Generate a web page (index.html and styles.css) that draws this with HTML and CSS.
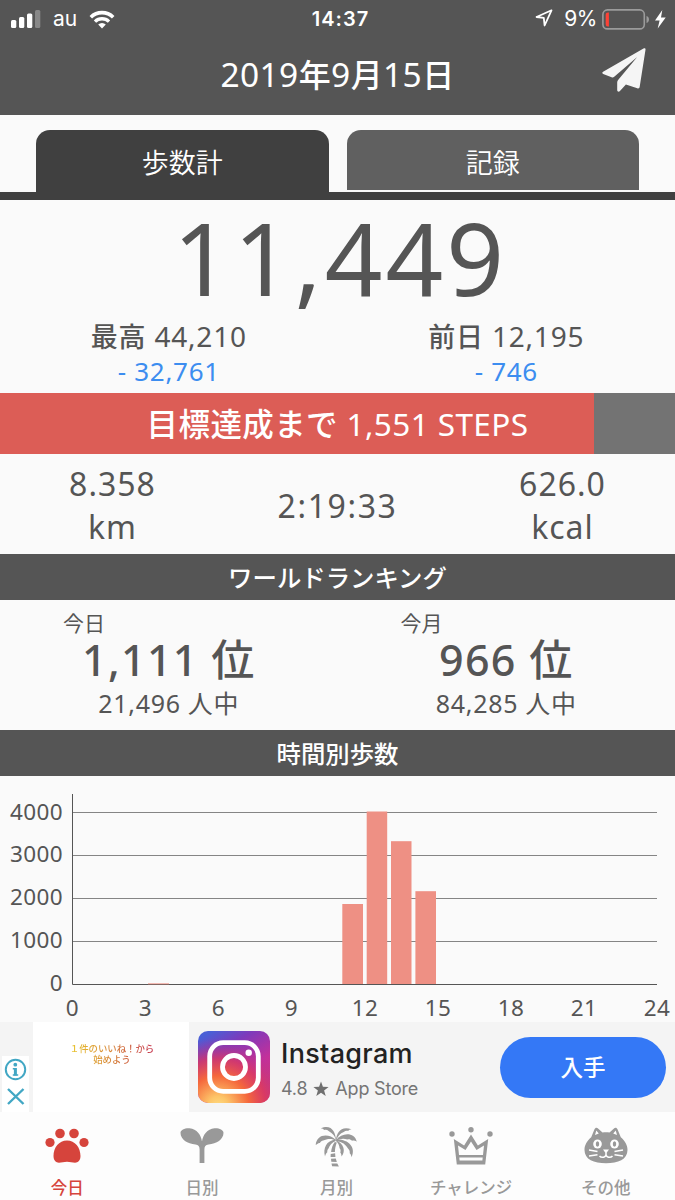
FILE: index.html
```html
<!DOCTYPE html>
<html lang="ja">
<head>
    <meta charset="UTF-8">
    <meta name="viewport" content="width=device-width, initial-scale=1.0">
    <title>歩数計</title>
    <link rel="stylesheet" href="styles.css">
</head>
<body>
    <header class="header">
        <div class="status-bar">
            <div class="status-left">
                <svg class="signal" width="30" height="18" viewBox="0 0 30 18" fill="#fff">
                    <rect x="0" y="10" width="5.3" height="8" rx="1.5"/>
                    <rect x="8" y="7" width="5.3" height="11" rx="1.5"/>
                    <rect x="16" y="3.6" width="5.3" height="14.4" rx="1.5"/>
                    <rect x="24" y="0" width="5.3" height="18" rx="1.5" opacity=".3"/>
                </svg>
                <span class="carrier">au</span>
                <svg class="wifi" width="26" height="19" viewBox="0 0 26 19">
                    <path d="M1.8 7.2a16 16 0 0 1 22.4 0" fill="none" stroke="#fff" stroke-width="3.6"/>
                    <path d="M6 11.6a10 10 0 0 1 14 0" fill="none" stroke="#fff" stroke-width="3.3"/>
                    <path d="M9.2 14.5a5.4 5.4 0 0 1 7.6 0L13 18.4z" fill="#fff"/>
                </svg>
            </div>
            <div class="clock">14:37</div>
            <div class="status-right">
                <svg class="location" width="18" height="18" viewBox="0 0 18 18">
                    <path d="M16.500 1.300L1.500 8l7.300.9.8 7.600z" fill="none" stroke="#fff" stroke-width="1.8" stroke-linejoin="round"/>
                </svg>
                <span class="percent">9%</span>
                <svg class="battery" width="48" height="21" viewBox="0 0 48 21">
                    <rect x=".9" y=".9" width="41.4" height="19" rx="4.5" fill="none" stroke="#9b9b9b" stroke-width="1.6"/>
                    <path d="M44.5 7v7c1.6-.5 2.500-1.800 2.500-3.500S46.100 7.500 44.500 7z" fill="#9b9b9b"/>
                    <path d="M6.900 3.500v14H6a2.300 2.300 0 0 1-2.300-2.300V5.800A2.300 2.300 0 0 1 6 3.500z" fill="#fc4236"/>
                </svg>
                <svg class="bolt" width="11" height="19" viewBox="0 0 11 19">
                    <path d="M7.300 0L0 10.400h4.600L2.700 18.500 10.700 7.600H6z" fill="#fff"/>
                </svg>
            </div>
        </div>
        <div class="title-bar">
            <h1>2019<b>年</b>9<b>月</b>15<b>日</b></h1>
            <svg class="send" width="44" height="44" viewBox="0 0 44 44">
                <path d="M41.500.6C42.700-.2 43.700.2 43.500 1.800L37.700 38.800C37.500 40.200 36.500 40.700 35.300 40.200L23.900 36.600 17.700 43.200C16.700 44.200 15.200 43.600 15.200 42.100V34.600C15.200 33.400 15.700 32.600 16.500 31.600L35.200 9 12.200 28.700C11.400 29.400 10.600 29.600 9.600 29.200L1.200 26C.1 25.500 0 24.400 1.100 23.700z" fill="#f5f5f5"/>
            </svg>
        </div>
    </header>

    <nav class="tabs">
        <div class="tab active">歩数計</div>
        <div class="tab">記録</div>
    </nav>

    <section class="summary">
        <div class="steps">11,449</div>
        <div class="compare">
            <div>
                <p class="compare-value"><b>最高</b> 44,210</p>
                <p class="compare-diff">- 32,761</p>
            </div>
            <div>
                <p class="compare-value"><b>前日</b> 12,195</p>
                <p class="compare-diff">- 746</p>
            </div>
        </div>
    </section>

    <div class="goal"><b>目標達成まで</b> 1,551 STEPS</div>

    <section class="stats">
        <div>8.358<br>km</div>
        <div class="time">2:19:33</div>
        <div>626.0<br>kcal</div>
    </section>

    <h2 class="section-title">ワールドランキング</h2>
    <section class="ranking">
        <div>
            <p class="rank-label">今日</p>
            <p class="rank-value">1,111 位</p>
            <p class="rank-total">21,496 人中</p>
        </div>
        <div>
            <p class="rank-label">今月</p>
            <p class="rank-value">966 位</p>
            <p class="rank-total">84,285 人中</p>
        </div>
    </section>

    <h2 class="section-title">時間別歩数</h2>
    <svg class="chart" width="675" height="246" viewBox="0 0 675 246">
        <g class="grid">
            <path d="M72 36.500h585M72 79.500h585M72 122.500h585M72 165.500h585"/>
        </g>
        <path class="axis" d="M72.500 18v190.500H657"/>
        <g class="bars">
            <rect x="148" y="207" width="21" height="1.500" opacity=".6"/>
            <rect x="342.300" y="128" width="20.700" height="80"/>
            <rect x="366.700" y="35.500" width="20.500" height="172.500"/>
            <rect x="391" y="65.200" width="20.500" height="142.800"/>
            <rect x="415.400" y="115.200" width="20.600" height="92.800"/>
        </g>
        <g class="label-y">
            <text x="63" y="43.500">4000</text>
            <text x="63" y="85.500">3000</text>
            <text x="63" y="128.500">2000</text>
            <text x="63" y="171.500">1000</text>
            <text x="63" y="214.500">0</text>
        </g>
        <g class="label-x">
            <text x="72.500" y="240">0</text>
            <text x="145.500" y="240">3</text>
            <text x="218.500" y="240">6</text>
            <text x="291.500" y="240">9</text>
            <text x="365" y="240">12</text>
            <text x="438" y="240">15</text>
            <text x="511" y="240">18</text>
            <text x="584" y="240">21</text>
            <text x="657" y="240">24</text>
        </g>
    </svg>

    <aside class="ad">
        <div class="ad-choices">
            <svg width="27" height="56" viewBox="0 0 27 56" fill="none" stroke="#42a7c4" stroke-width="2">
                <circle cx="13.500" cy="13.500" r="9.700"/>
                <circle cx="13.300" cy="8.700" r="1.900" fill="#42a7c4" stroke="none"/>
                <path d="M10.800 12.700h2.500M10.800 19h5.400" stroke-width="1.600"/>
                <path d="M13.400 12v7.500" stroke-width="3"/>
                <path d="M6 33l15.500 15M21.500 33L6 48" stroke-width="2.400"/>
            </svg>
        </div>
        <div class="ad-banner"><span>１件のいいね！から<br>始めよう</span></div>
        <svg class="ad-icon" width="72" height="72" viewBox="0 0 72 72">
            <defs>
                <linearGradient id="igBase" x1=".2" y1="0" x2=".8" y2="1">
                    <stop offset="0" stop-color="#4a5fd6"/>
                    <stop offset=".25" stop-color="#7e3abb"/>
                    <stop offset=".6" stop-color="#c3309a"/>
                    <stop offset="1" stop-color="#cf3a70"/>
                </linearGradient>
                <radialGradient id="igGlow" cx=".28" cy="1.050" r=".95">
                    <stop offset="0" stop-color="#ffdc80"/>
                    <stop offset=".15" stop-color="#fdc468"/>
                    <stop offset=".45" stop-color="#f5683c"/>
                    <stop offset=".7" stop-color="#dc3a60" stop-opacity=".8"/>
                    <stop offset="1" stop-color="#b0309b" stop-opacity="0"/>
                </radialGradient>
            </defs>
            <rect width="72" height="72" rx="10" fill="url(#igBase)"/>
            <rect width="72" height="72" rx="10" fill="url(#igGlow)"/>
            <rect x="11.700" y="11.700" width="48.600" height="48.600" rx="13.500" fill="none" stroke="#fff" stroke-width="4.800"/>
            <circle cx="36" cy="36" r="11.500" fill="none" stroke="#fff" stroke-width="4.800"/>
            <circle cx="50.700" cy="21.700" r="3.200" fill="#fff"/>
        </svg>
        <div class="ad-text">
            <p class="ad-name">Instagram</p>
            <p class="ad-meta">4.8
                <svg width="16" height="16" viewBox="0 0 16 16"><path d="M8 .5l1.900 5.300 5.700.2-4.500 3.500 1.600 5.500L8 11.800 3.300 15l1.600-5.500L.4 6l5.700-.2z" fill="#6f6f6f"/></svg>
                App Store</p>
        </div>
        <div class="ad-button">入手</div>
    </aside>

    <nav class="tab-bar">
        <div class="tab-item active">
            <svg width="44" height="44" viewBox="0 0 44 44" fill="currentColor">
                <circle cx="5" cy="19.500" r="4.600"/>
                <circle cx="15" cy="10.500" r="4.800"/>
                <circle cx="29" cy="10.500" r="4.800"/>
                <circle cx="39" cy="19.500" r="4.600"/>
                <path d="M22 17.500c8 0 13.500 7 13.500 15.500 0 4.500-2.500 6.700-5.500 6.700-2.500 0-5-.9-8-.9s-5.500.9-8 .9c-3 0-5.500-2.200-5.500-6.700C8.500 24.500 14 17.500 22 17.500z"/>
            </svg>
            <span>今日</span>
        </div>
        <div class="tab-item">
            <svg width="44" height="44" viewBox="0 0 44 44" fill="currentColor">
                <path d="M19.600 40V26.500C19.600 23.500 18.500 21.800 15.500 21.400 7.500 21 .5 16.500.5 9.800.5 6.800 5 5 9.500 5.300 17 6 21 12 22 18.500 23 12 27 6 34.500 5.300 39 5 43.500 6.800 43.500 9.800c0 6.700-7 11.200-15 11.600-3 .4-4.100 2.100-4.100 5.100V40z"/>
            </svg>
            <span>日別</span>
        </div>
        <div class="tab-item">
            <svg width="44" height="44" viewBox="0 0 44 44" fill="currentColor">
                <path d="M22 17C21.500 9 17.500 1 6.800 5.300c1.500.2 2.500.7 3.300 1.700 1.800-.6 3.200-.2 4.500 1C19 10.500 21 13 21.500 16.500z"/>
                <path d="M22 17C14 9.500 2.500 11.500 1.700 22c1.800-1.500 3-2.100 4.200-2.100.7-1.400 2-2.200 3.300-2.400C13 15.500 18 15.200 22 17.500z"/>
                <path d="M21.500 16.500C12.500 17.500 8.800 25 11 33.500c.5-2 1.200-3.200 2.300-4.200-.2-1.600.2-2.900 1.200-3.800 1-3.200 3.700-6 7.200-7.500z"/>
                <path d="M22 17C22.500 9.500 27 2.500 37.500 6.200c-1.600.2-2.600.7-3.300 1.800-1.800-.4-3.200 0-4.400 1.100C26 10.500 23.500 13.500 22.500 17z"/>
                <path d="M22 17.200C28 9.200 40.500 9 42.800 18.700c-2-1-3.300-1.300-4.600-1-1.500-1.500-3.200-1.900-4.900-1.300C29.500 15.300 26 15.500 22 18z"/>
                <path d="M22.500 16.500C34 16 42.500 24 37.500 34.300c-.2-2-.8-3.200-1.800-4 .3-1.900-.2-3.400-1.500-4.500C32 21.500 28 18.800 22.500 18z"/>
                <path d="M22 17C30 21 32 28 27.500 33.500c0-2-.4-3-1.200-4 .6-1.900.3-3.200-.7-4.200C25.500 22.500 24 20 22 18z"/>
                <path d="M20.800 19l2 .5c-1.300 3.500-1.900 6.500-1.900 9.500h-3.800c.3-3.500 1.500-7 3.700-10z"/>
                <path d="M16.700 31l4.400-.7.300 3.600h-4.800zM17 35.700l4.800-.2 1 3.400-5.500-.2zM17.500 40.400l5.800.1 1.600 3-6.800-.2z"/>
            </svg>
            <span>月別</span>
        </div>
        <div class="tab-item">
            <svg width="44" height="44" viewBox="0 0 44 44">
                <g fill="currentColor">
                    <circle cx="3" cy="11" r="2.700"/>
                    <circle cx="22" cy="6.800" r="2.700"/>
                    <circle cx="41" cy="11" r="2.700"/>
                    <path fill-rule="evenodd" d="M4.800 16l10.300 6.500L22 11.500l6.900 11L39.200 16 36.200 41.500H7.800zM9 22.500l1 9.500h24l1-9.500-7.500 4.500L22 18.500 16.500 27zM10.300 34.500l.3 3h22.800l.3-3z"/>
                </g>
            </svg>
            <span>チャレンジ</span>
        </div>
        <div class="tab-item">
            <svg width="44" height="44" viewBox="0 0 44 44">
                <path d="M10.500 6.300c.8-2 2.500-2 3.800-.6l4.200 3.800c2.300-.4 4.700-.4 7 0l4.200-3.800c1.300-1.400 3-1.400 3.800.6l3.300 8c4 3.500 6.700 7.700 6.700 12.700 0 9.500-9.500 13.300-21.500 13.300S.5 36.500.5 27c0-5 2.700-9.200 6.700-12.700z" fill="currentColor"/>
                <g fill="#fff">
                    <ellipse cx="13.500" cy="21" rx="4.300" ry="4.600"/>
                    <ellipse cx="30.500" cy="21" rx="4.300" ry="4.600"/>
                    <path d="M19 26.500h6l-2.200 3h-1.600z"/>
                    <path d="M12.300 7.500l2.500 3-3.800 1.500zM31.700 7.500l-2.500 3 3.800 1.500z"/>
                </g>
                <path d="M22 29v2.500c-.2 3-4.500 3.800-6.500 1.500M22 31.500c.2 3 4.500 3.800 6.500 1.500M5 27l8.500 1.500M5 33l8.500-1.300M39 27l-8.500 1.500M39 33l-8.500-1.300" fill="none" stroke="#fff" stroke-width="1.500"/>
                <ellipse cx="13.500" cy="21" rx="1.700" ry="2.700" fill="currentColor"/>
                <ellipse cx="30.500" cy="21" rx="1.700" ry="2.700" fill="currentColor"/>
            </svg>
            <span>その他</span>
        </div>
    </nav>
</body>
</html>
```
FILE: styles.css
```css
* {
    box-sizing: border-box;
    margin: 0;
    padding: 0;
}
body {
    width: 675px;
    height: 1200px;
    overflow: hidden;
    background: #fafafa;
    color: #555;
    font-family: 'Noto Sans', 'Noto Sans CJK JP', sans-serif;
}
svg {
    display: block;
    flex: none;
}
b {
    font-weight: 500;
}

/* header */
.header {
    height: 115px;
    background: #555;
    color: #fff;
}
.status-bar {
    display: grid;
    grid-template-columns: 1fr auto 1fr;
    height: 38px;
    padding: 0 9px 0 11px;
    font-family: Inter, sans-serif;
    font-size: 20px;
    line-height: 38px;
}
.status-left,
.status-right {
    display: flex;
    align-items: center;
}
.status-right {
    justify-content: flex-end;
}
.carrier {
    margin: 0 12px 0 12px;
    font-size: 21px;
}
.clock {
    padding-left: 4px;
    font-weight: 600;
    letter-spacing: 1px;
}
.location {
    margin-top: -2px;
}
.percent {
    margin: 0 5px 0 11px;
    font-size: 21px;
    letter-spacing: -0.5px;
}
.bolt {
    margin-left: 5px;
}
.title-bar {
    display: grid;
    grid-template-columns: 72px 1fr 72px;
    align-items: center;
    height: 72px;
}
.title-bar h1 {
    grid-column: 2;
    font-size: 33.5px;
    font-weight: 400;
    letter-spacing: 0.4px;
    line-height: 72px;
    text-align: center;
}
.title-bar b {
    font-size: 32px;
}
.send {
    margin: -10px 0 0 -1px;
}

/* tabs */
.tabs {
    display: flex;
    gap: 18px;
    height: 85px;
    padding: 15px 36px 0;
    border-bottom: 8px solid #404040;
}
.tab {
    flex: 1;
    height: 60px;
    border-radius: 14px 14px 0 0;
    background: #606060;
    color: #fff;
    font-size: 27px;
    font-weight: 350;
    line-height: 65px;
    text-align: center;
}
.tab.active {
    height: 62px;
    background: #404040;
}

/* summary */
.summary {
    height: 193px;
    padding-top: 2px;
    text-align: center;
}
.steps {
    padding-left: 5px;
    font-size: 101px;
    letter-spacing: 3px;
    line-height: 110px;
}
.compare {
    display: grid;
    grid-template-columns: 1fr 1fr;
    padding-top: 6px;
}
.compare-value {
    font-size: 28px;
    letter-spacing: 0.8px;
    line-height: 36px;
}
.compare-value b {
    font-size: 27px;
}
.compare-diff {
    color: #3c8df0;
    font-size: 26px;
    letter-spacing: 0.7px;
    line-height: 32px;
}
.goal {
    height: 61px;
    background: linear-gradient(to right, #dc5d56 88%, #737373 88%);
    color: #fff;
    font-size: 31.5px;
    letter-spacing: 0.4px;
    line-height: 62px;
    text-align: center;
}
.stats {
    display: grid;
    grid-template-columns: repeat(3, 1fr);
    align-items: center;
    height: 100px;
    padding-top: 2px;
    font-size: 32px;
    letter-spacing: 1px;
    line-height: 43px;
    text-align: center;
}
.stats .time {
    letter-spacing: 1.6px;
}
.section-title {
    height: 46px;
    background: #555;
    color: #fff;
    font-size: 24.4px;
    font-weight: 500;
    line-height: 48px;
    text-align: center;
}

/* ranking */
.ranking {
    display: grid;
    grid-template-columns: 1fr 1fr;
    height: 130px;
    padding-top: 9px;
    text-align: center;
}
.rank-label {
    padding-left: 63px;
    font-size: 21px;
    line-height: 28px;
    text-align: left;
}
.rank-value {
    font-size: 43px;
    font-weight: 500;
    letter-spacing: 1.3px;
    line-height: 46px;
}
.rank-total {
    margin-top: 4px;
    font-size: 25px;
    letter-spacing: 0.7px;
    line-height: 33px;
}

/* chart */
.chart text {
    fill: #555;
    font-size: 22.5px;
    letter-spacing: 0.4px;
}
.grid {
    stroke: #858585;
}
.bars {
    fill: #ee9084;
}
.axis {
    fill: none;
    stroke: #555;
}
.label-y {
    text-anchor: end;
}
.label-x {
    text-anchor: middle;
}

/* ad */
.ad {
    display: flex;
    align-items: center;
    height: 90px;
    padding-right: 9px;
    background: #f4f4f4;
}
.ad-choices {
    align-self: flex-end;
    width: 27px;
    height: 56px;
    margin: 0 4px 0 2px;
    background: #fff;
}
.ad-banner {
    align-self: stretch;
    width: 156px;
    padding: 22px 0 0 2px;
    background: #fff;
    font-size: 9.4px;
    font-weight: 500;
    line-height: 10.5px;
    text-align: center;
}
.ad-banner span {
    display: inline-block;
    background: linear-gradient(to right, #e9c62e, #d88a35 45%, #c4304a);
    -webkit-background-clip: text;
    background-clip: text;
    color: transparent;
}
.ad-icon {
    margin: 0 11px 0 9px;
}
.ad-text {
    flex: 1;
    padding-top: 8px;
    font-family: Inter, sans-serif;
}
.ad-name {
    color: #222;
    font-size: 27px;
    font-weight: 500;
    letter-spacing: 0.3px;
    line-height: 36px;
}
.ad-meta {
    display: flex;
    align-items: center;
    gap: 6px;
    color: #757575;
    font-size: 18px;
    letter-spacing: -0.2px;
    line-height: 34px;
}
.ad-button {
    width: 166px;
    height: 61px;
    border-radius: 31px;
    background: #3478f6;
    color: #fff;
    font-size: 22.5px;
    font-weight: 500;
    line-height: 61px;
    text-align: center;
}

/* bottom tab bar */
.tab-bar {
    display: grid;
    grid-template-columns: repeat(5, 1fr);
    height: 88px;
    padding-right: 2px;
    background: #fdfdfd;
    color: #999;
}
.tab-item {
    display: flex;
    flex-direction: column;
    align-items: center;
    padding-top: 11px;
    font-size: 16.5px;
    font-weight: 500;
    line-height: 24px;
}
.tab-item span {
    margin-top: 9px;
}
.tab-item.active {
    color: #d6443c;
}
```
